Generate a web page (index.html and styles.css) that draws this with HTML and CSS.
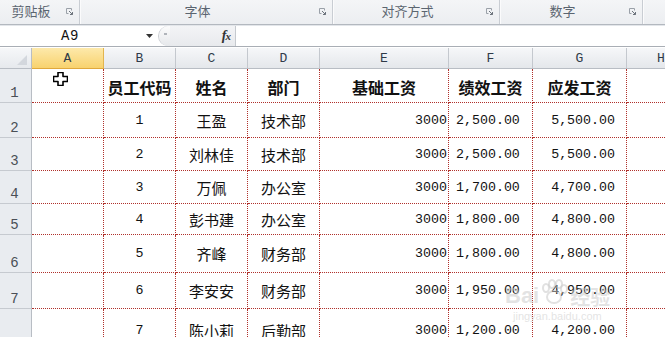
FILE: index.html
```html
<!DOCTYPE html>
<html lang="zh-CN">
<head>
<meta charset="utf-8">
<title>Excel</title>
<link rel="stylesheet" href="styles.css">
</head>
<body>
<div class="ribbon">
  <div class="grp g1"><span class="lbl">剪贴板</span><svg class="launch" width="7" height="7" viewBox="0 0 7 7"><path d="M0.5 0.5h5v2M0.5 0.5v5h2" fill="none" stroke="#9aa0a8"/><path d="M3 3l3.5 3.5M6.5 4v2.5H4" fill="none" stroke="#6c737c"/></svg></div>
  <div class="grp g2"><span class="lbl">字体</span><svg class="launch" width="7" height="7" viewBox="0 0 7 7"><path d="M0.5 0.5h5v2M0.5 0.5v5h2" fill="none" stroke="#9aa0a8"/><path d="M3 3l3.5 3.5M6.5 4v2.5H4" fill="none" stroke="#6c737c"/></svg></div>
  <div class="grp g3"><span class="lbl">对齐方式</span><svg class="launch" width="7" height="7" viewBox="0 0 7 7"><path d="M0.5 0.5h5v2M0.5 0.5v5h2" fill="none" stroke="#9aa0a8"/><path d="M3 3l3.5 3.5M6.5 4v2.5H4" fill="none" stroke="#6c737c"/></svg></div>
  <div class="grp g4"><span class="lbl">数字</span><svg class="launch" width="7" height="7" viewBox="0 0 7 7"><path d="M0.5 0.5h5v2M0.5 0.5v5h2" fill="none" stroke="#9aa0a8"/><path d="M3 3l3.5 3.5M6.5 4v2.5H4" fill="none" stroke="#6c737c"/></svg></div>
  <div class="grp g5"></div>
</div>

<div class="fbar">
  <div class="namebox"><span class="ref">A9</span><svg class="drop" width="7" height="4" viewBox="0 0 7 4"><path d="M0 0h7L3.5 4z" fill="#333"/></svg></div>
  <div class="fxarea"><span class="knob"><span class="dot"></span></span><span class="fx">f<i>x</i></span></div>
  <div class="finput"></div>
</div>

<div class="sheet">
  <div class="corner"><svg width="10" height="10" viewBox="0 0 10 10"><path d="M10 0V10H0z" fill="#d3d7dd"/></svg></div>
  <div class="ch sel">A</div><div class="ch">B</div><div class="ch">C</div><div class="ch">D</div><div class="ch">E</div><div class="ch">F</div><div class="ch">G</div><div class="ch last">H</div>

  <div class="rh">1</div>
  <div class="c"></div><div class="c hd">员工代码</div><div class="c hd">姓名</div><div class="c hd">部门</div><div class="c hd">基础工资</div><div class="c hd">绩效工资</div><div class="c hd">应发工资</div><div class="c h"></div>

  <div class="rh">2</div>
  <div class="c"></div><div class="c n">1</div><div class="c t">王盈</div><div class="c t">技术部</div><div class="c n r">3000</div><div class="c n f">2,500.00</div><div class="c n g">5,500.00</div><div class="c h"></div>

  <div class="rh">3</div>
  <div class="c"></div><div class="c n">2</div><div class="c t">刘林佳</div><div class="c t">技术部</div><div class="c n r">3000</div><div class="c n f">2,500.00</div><div class="c n g">5,500.00</div><div class="c h"></div>

  <div class="rh">4</div>
  <div class="c"></div><div class="c n">3</div><div class="c t">万佩</div><div class="c t">办公室</div><div class="c n r">3000</div><div class="c n f">1,700.00</div><div class="c n g">4,700.00</div><div class="c h"></div>

  <div class="rh">5</div>
  <div class="c"></div><div class="c n">4</div><div class="c t">彭书建</div><div class="c t">办公室</div><div class="c n r">3000</div><div class="c n f">1,800.00</div><div class="c n g">4,800.00</div><div class="c h"></div>

  <div class="rh">6</div>
  <div class="c"></div><div class="c n">5</div><div class="c t">齐峰</div><div class="c t">财务部</div><div class="c n r">3000</div><div class="c n f">1,800.00</div><div class="c n g">4,800.00</div><div class="c h"></div>

  <div class="rh">7</div>
  <div class="c"></div><div class="c n">6</div><div class="c t">李安安</div><div class="c t">财务部</div><div class="c n r">3000</div><div class="c n f">1,950.00</div><div class="c n g">4,950.00</div><div class="c h"></div>

  <div class="rh"></div>
  <div class="c"></div><div class="c n">7</div><div class="c t">陈小莉</div><div class="c t">后勤部</div><div class="c n r">3000</div><div class="c n f">1,200.00</div><div class="c n g">4,200.00</div><div class="c h"></div>

  <svg class="cursor" width="15" height="14" viewBox="0 0 15 14"><path d="M5 0.5h5v4h4.5v5H10v4H5v-4H0.5v-5H5z" fill="#fff" stroke="#000" stroke-width="1.6" stroke-linejoin="round"/></svg>
</div>

<div class="wm">
  <div class="wm1"><span>Bai</span><svg width="30" height="26" viewBox="0 0 30 26"><g fill="none" stroke="rgba(200,200,200,0.55)" stroke-width="2"><ellipse cx="15" cy="18" rx="7" ry="6"/><ellipse cx="7" cy="9" rx="3" ry="4"/><ellipse cx="13" cy="5" rx="3" ry="4"/><ellipse cx="20" cy="5" rx="3" ry="4"/><ellipse cx="25" cy="10" rx="3" ry="4"/></g></svg><span class="jy">经验</span></div>
  <div class="wm2">jingyan.baidu.com</div>
</div>
</body>
</html>
```
FILE: styles.css
```css
* { box-sizing: border-box; }
html, body {
  margin: 0;
  padding: 0;
  background: #fff;
  width: 665px;
  height: 337px;
  overflow: hidden;
  position: relative;
}

/* ribbon group label strip */
.ribbon {
  display: flex;
  height: 25px;
  background: linear-gradient(#f4f5f7, #eceef1);
  border-bottom: 1px solid #b3b8bf;
  font-family: "Noto Sans CJK SC", "Noto Sans", sans-serif;
  font-size: 13px;
  color: #5b6570;
}
.grp {
  display: flex;
  align-items: center;
  height: 24px;
  border-right: 1px solid #c9cdd3;
  box-shadow: 1px 0 0 #fbfbfc;
  padding-right: 6px;
}
.grp .lbl {
  flex: 1;
  text-align: center;
  line-height: 1;
  margin-top: -3px;
}
.launch {
  margin-left: 4px;
  margin-top: -2px;
  flex: none;
}
.g1 { width: 80px; }
.g2 { width: 253px; }
.g3 { width: 167px; }
.g4 { width: 143px; }
.g5 { flex: 1; border-right: none; }

/* formula bar */
.fbar {
  display: flex;
  height: 22px;
  background: #fff;
  border-top: 1px solid #e3e6ea;
  border-bottom: 1px solid #a9aeb5;
}
.namebox {
  width: 158px;
  display: flex;
  align-items: center;
}
.ref {
  font-family: "Liberation Mono", monospace;
  font-size: 14px;
  color: #111;
  margin-left: 61px;
  letter-spacing: 0.5px;
}
.drop {
  margin-left: 67px;
}
.fxarea {
  width: 78px;
  display: flex;
  align-items: center;
  background: linear-gradient(#f3f4f6, #e8eaed);
  border-right: 1px solid #c5c9ce;
  border-radius: 11px 0 0 11px;
  border-left: 1px solid #c9ccd1;
}
.knob {
  width: 11px;
  height: 20px;
  border-radius: 10px 0 0 10px;
  background: linear-gradient(#fcfcfc, #e6e8eb);
  position: relative;
}
.dot {
  position: absolute;
  left: 5px;
  top: 7px;
  width: 3px;
  height: 2px;
  background: #b0b4ba;
}
.fx {
  margin-left: auto;
  margin-right: 5px;
  font-family: "Liberation Serif", serif;
  font-style: italic;
  font-weight: bold;
  font-size: 14px;
  color: #333;
  letter-spacing: -1px;
}
.fx i { font-size: 11px; }
.finput { flex: 1; background: #fff; }

/* sheet */
.sheet {
  margin-top: 1px;
  display: grid;
  grid-template-columns: 32px 72px 72px 72px 72px 129px 84px 94px 68px;
  grid-template-rows: 21px 34px 35px 33px 33px 31px 38px 36px 44px;
  position: relative;
  background: #fff;
}
.corner {
  background: linear-gradient(#f6f7f9, #e6e9ed);
  border-right: 1px solid #b8bdc4;
  border-bottom: 1px solid #b8bdc4;
  display: flex;
  align-items: flex-end;
  justify-content: flex-end;
  padding: 0 4px 3px 0;
}
.ch {
  background: linear-gradient(#f6f7f9, #e4e7eb);
  border-right: 1px solid #c4c8ce;
  border-bottom: 1px solid #b8bdc4;
  font-family: "Liberation Mono", monospace;
  font-size: 13px;
  color: #2f3a48;
  display: flex;
  align-items: center;
  justify-content: center;
}
.ch.sel {
  background: linear-gradient(#fde9ab, #f8d26e);
  border-right: 1px solid #e2b54f;
  border-bottom: 1px solid #e0a83c;
}
.ch.last { border-right: none; }
.rh {
  background: #e9ecf0;
  border-right: 1px solid #b8bdc4;
  border-bottom: 1px solid #c6cad0;
  font-family: "Liberation Mono", monospace;
  font-size: 14px;
  color: #4a4f56;
  display: flex;
  align-items: flex-end;
  justify-content: center;
  padding: 0 2px 2px 0;
  line-height: 1;
}
.c {
  border-right: 1px dotted #b0302b;
  border-bottom: 1px dotted #b0302b;
  display: flex;
  align-items: center;
  justify-content: center;
  color: #111;
}
.c.h { border-right: none; }
.hd {
  font-family: "Noto Sans CJK SC", sans-serif;
  font-weight: bold;
  font-size: 16px;
  padding-top: 3px;
}
.t {
  font-family: "Noto Sans CJK SC", sans-serif;
  font-size: 15px;
}
.n {
  font-family: "Liberation Mono", monospace;
  font-size: 13.3px;
}
.n.r { justify-content: flex-end; padding-right: 1px; }
.n.f { justify-content: flex-start; padding-left: 7px; }
.n.g { justify-content: flex-end; padding-right: 11px; }

.cursor {
  position: absolute;
  left: 53px;
  top: 24px;
}

/* watermark */
.wm {
  position: absolute;
  left: 505px;
  top: 279px;
  color: rgba(200, 200, 200, 0.5);
  font-family: "Liberation Sans", sans-serif;
  pointer-events: none;
}
.wm1 {
  display: flex;
  align-items: flex-end;
  font-size: 22px;
  font-weight: bold;
  line-height: 1;
}
.wm1 svg { margin: 0 1px 2px 0; }
.wm1 .jy {
  font-family: "Noto Sans CJK SC", sans-serif;
  font-size: 20px;
}
.wm2 {
  font-size: 11px;
  margin-left: 8px;
  margin-top: 3px;
}
```
